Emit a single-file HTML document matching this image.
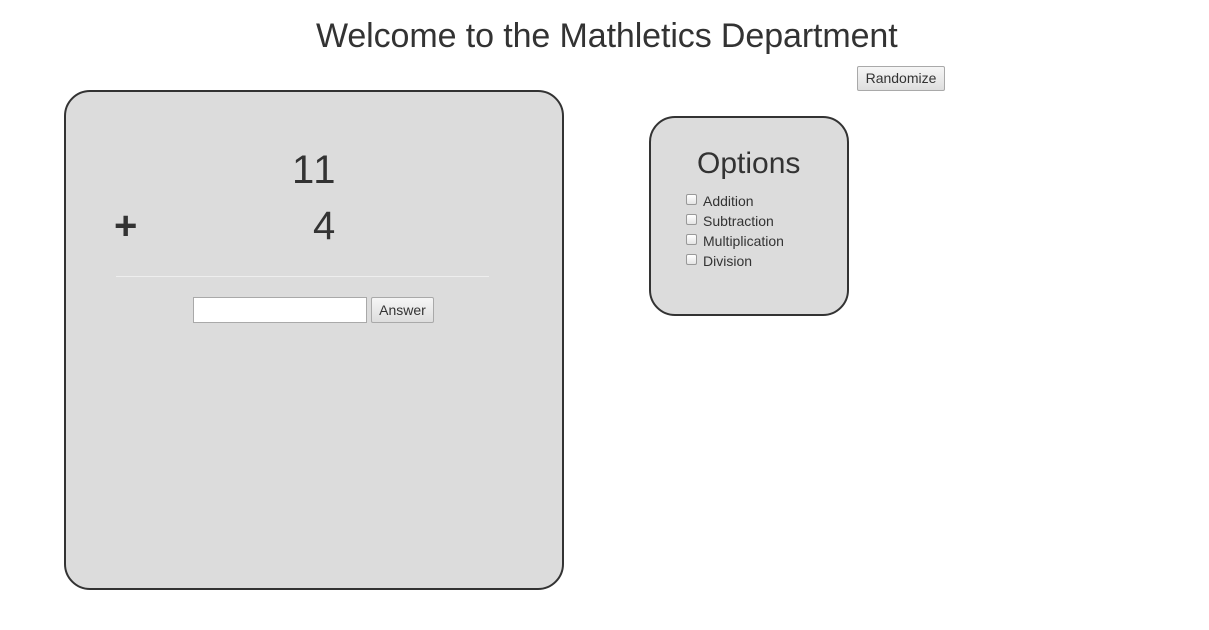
<!DOCTYPE html>
<html><head><style>
body{margin:0;width:1209px;height:630px;background:#fff;font-family:"Liberation Sans",Arial,sans-serif;color:#333;position:relative;overflow:hidden}
.a{position:absolute;white-space:nowrap}
.btn{position:absolute;background:linear-gradient(#f6f6f6,#dedede);border:1px solid #a9a9a9;border-radius:2px;font-size:14px;color:#333;box-sizing:border-box;text-align:center}
.cb{position:absolute;width:11px;height:11px;border:1px solid #999;border-radius:2px;background:linear-gradient(#fff,#e4e4e4);box-sizing:border-box}
.lbl{position:absolute;font-size:14px;color:#333}
</style></head><body>
<div class="a" style="left:316px;top:17px;font-size:34px;letter-spacing:-0.1px">Welcome to the Mathletics Department</div>
<div class="btn" style="left:857px;top:66px;width:88px;height:25px;line-height:23px">Randomize</div>

<div class="a" style="left:64px;top:90px;width:500px;height:500px;box-sizing:border-box;border:2px solid #333;border-radius:26px;background:#dcdcdc"></div>
<div class="a" style="left:292px;top:148px;font-size:40px;letter-spacing:2px">11</div>
<div class="a" style="left:114px;top:204px;font-size:40px;font-weight:bold">+</div>
<div class="a" style="left:313px;top:204px;font-size:40px">4</div>
<div class="a" style="left:116px;top:276px;width:373px;height:1px;background:#eee"></div>
<div class="a" style="left:193px;top:297px;width:174px;height:26px;box-sizing:border-box;border:1px solid #a9a9a9;background:#fff"></div>
<div class="btn" style="left:371px;top:297px;width:63px;height:26px;line-height:24px">Answer</div>

<div class="a" style="left:649px;top:116px;width:200px;height:200px;box-sizing:border-box;border:2px solid #333;border-radius:26px;background:#dcdcdc"></div>
<div class="a" style="left:697px;top:147px;font-size:30px">Options</div>
<div class="cb" style="left:686px;top:194px"></div><div class="lbl" style="left:703px;top:193px">Addition</div>
<div class="cb" style="left:686px;top:214px"></div><div class="lbl" style="left:703px;top:213px">Subtraction</div>
<div class="cb" style="left:686px;top:234px"></div><div class="lbl" style="left:703px;top:233px">Multiplication</div>
<div class="cb" style="left:686px;top:254px"></div><div class="lbl" style="left:703px;top:253px">Division</div>
</body></html>
